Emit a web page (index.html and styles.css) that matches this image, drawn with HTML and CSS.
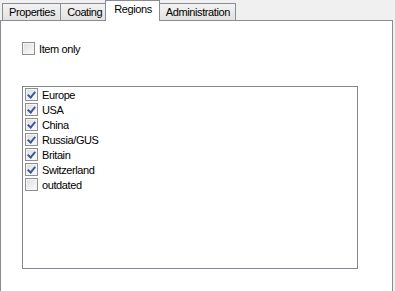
FILE: index.html
```html
<!DOCTYPE html>
<html lang="en">
<head>
    <meta charset="UTF-8">
    <title>Regions</title>
    <link rel="stylesheet" href="styles.css">
</head>
<body>
    <div class="tabs">
        <div class="tab">Properties</div>
        <div class="tab">Coating</div>
        <div class="tab active">Regions</div>
        <div class="tab">Administration</div>
    </div>
    <div class="panel">
        <label class="check-row top">
            <span class="box"></span>Item only
        </label>
        <div class="listbox">
            <label class="check-row"><span class="box checked"></span>Europe</label>
            <label class="check-row"><span class="box checked"></span>USA</label>
            <label class="check-row"><span class="box checked"></span>China</label>
            <label class="check-row"><span class="box checked"></span>Russia/GUS</label>
            <label class="check-row"><span class="box checked"></span>Britain</label>
            <label class="check-row"><span class="box checked"></span>Switzerland</label>
            <label class="check-row"><span class="box"></span>outdated</label>
        </div>
    </div>
</body>
</html>
```
FILE: styles.css
```css
body{
    margin: 0;
    background: #f0f0f0;
    font-family: "Liberation Sans", Arial, sans-serif;
    font-size: 11px;
    letter-spacing: -0.4px;
    color: #000;
    overflow: hidden;
}
.tabs{
    display: flex;
    align-items: flex-end;
    height: 20px;
    padding-left: 2px;
}
.tab{
    height: 16px;
    line-height: 16px;
    padding: 0 5px 0 6px;
    border: 1px solid #898c95;
    border-bottom: none;
    background: linear-gradient(#f3f3f3, #e2e2e2);
    margin-right: -1px;
}
.tab.active{
    height: 20px;
    line-height: 17px;
    background: #fff;
    margin: 0 -1px -1px -2px;
    padding: 0 7px 0 8px;
    position: relative;
    z-index: 1;
}
.panel{
    width: 393px;
    height: 280px;
    border: 1px solid #898c95;
    background: #fff;
    padding: 0 0 0 21px;
    box-sizing: border-box;
}
.check-row{
    display: flex;
    align-items: center;
    height: 15px;
    gap: 4px;
}
.check-row.top{
    margin-top: 21px;
    height: 13px;
}
.box{
    width: 11px;
    height: 11px;
    border: 1px solid #8f8f8f;
    background: linear-gradient(135deg, #dcdcdc, #fdfdfd);
    box-shadow: inset 0 0 0 1px #f4f4f4;
    position: relative;
    flex: none;
}
.box.checked::after{
    content: "";
    position: absolute;
    left: 3px;
    top: 1px;
    width: 3px;
    height: 6px;
    border: solid #3c5a9a;
    border-width: 0 2px 2px 0;
    transform: rotate(40deg);
}
.listbox{
    width: 336px;
    height: 183px;
    box-sizing: border-box;
    border: 1px solid #828790;
    margin-top: 31px;
    padding: 0 2px;
}
```
